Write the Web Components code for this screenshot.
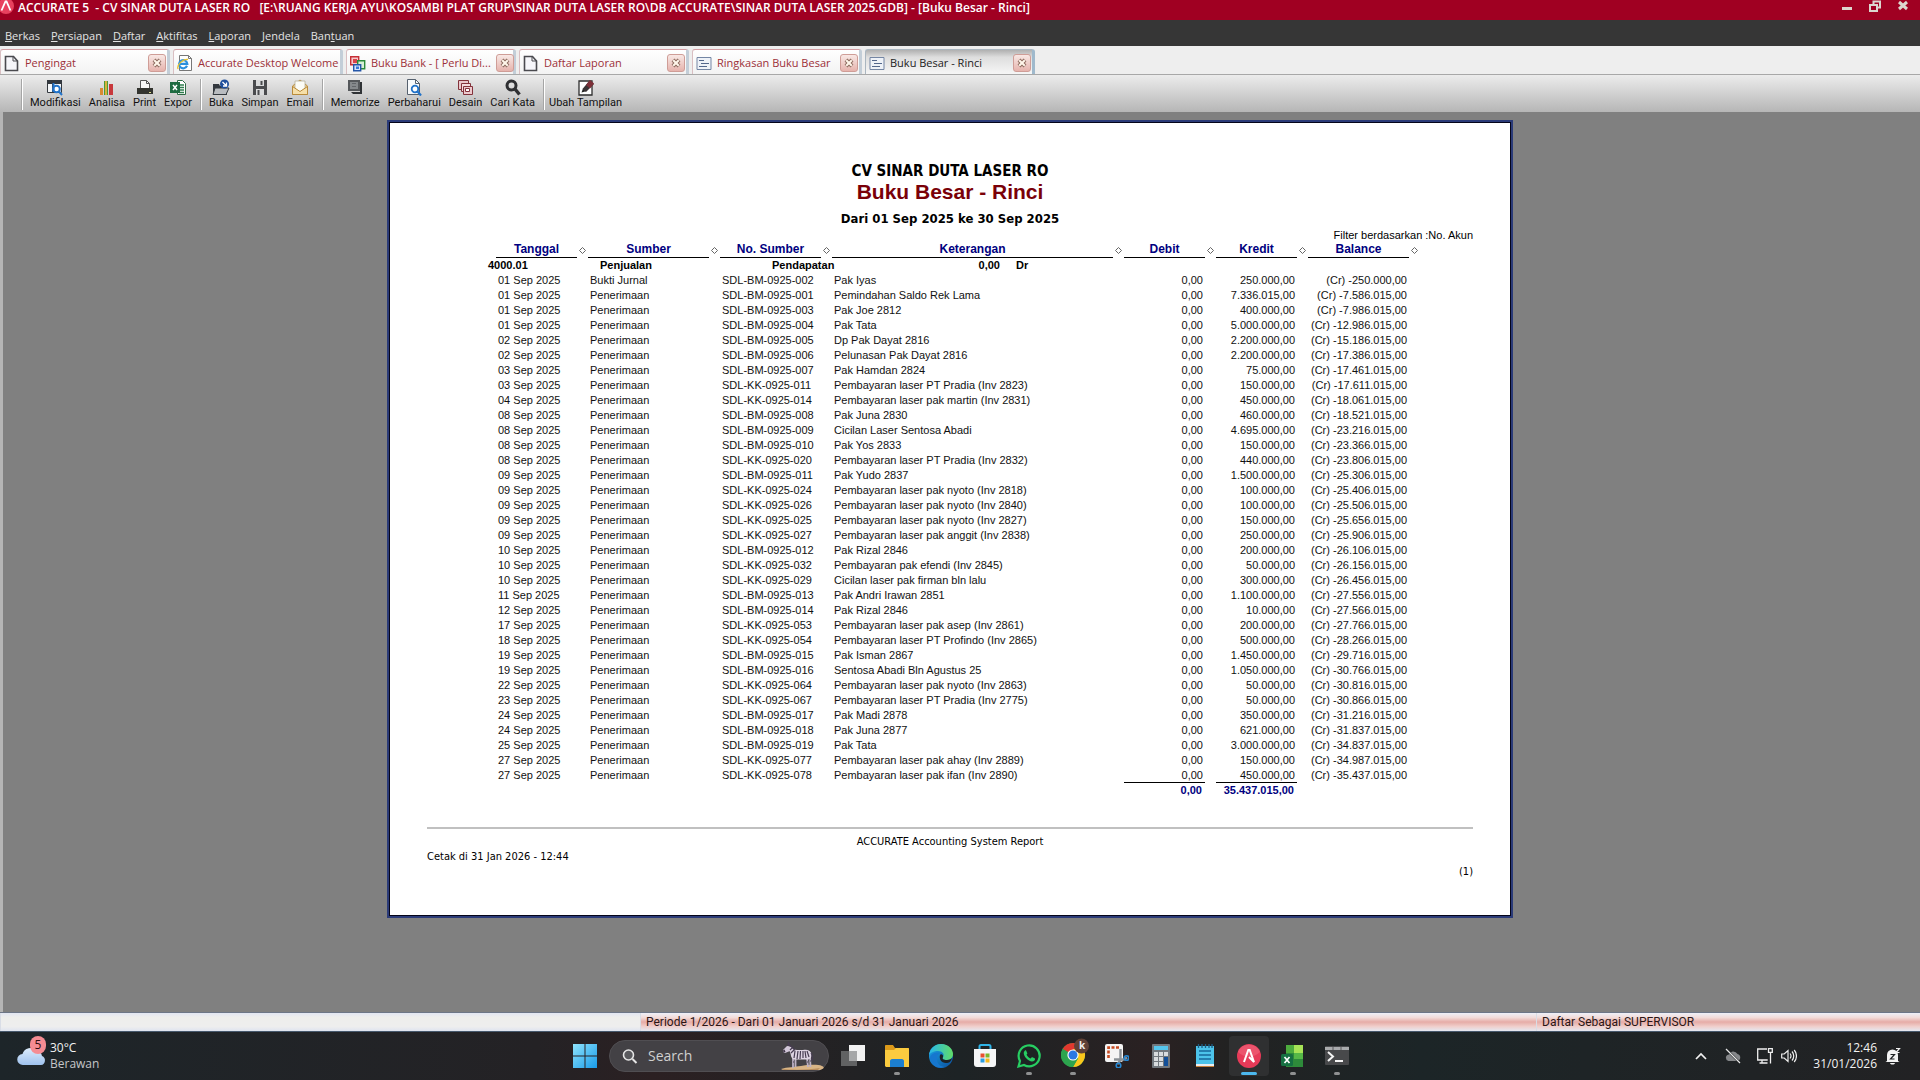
<!DOCTYPE html>
<html lang="id">
<head>
<meta charset="utf-8">
<title>ACCURATE 5 - Buku Besar - Rinci</title>
<style>
html,body{height:100%;margin:0}
body{font-family:Roboto,"Open Sans",sans-serif;background:#808080}
</style>
</head>
<body>
<accurate-app></accurate-app>
<script>
const svg=(w,h,body,extra='')=>`<svg width="${w}" height="${h}" viewBox="0 0 ${w} ${h}" aria-hidden="true" ${extra}>${body}</svg>`;
const ICON={
 logo:svg(14,16,'<circle cx="6" cy="6" r="8" fill="#e8415f"/><path d="M1.500 10.500 5.500 1.500h1l4 9" fill="none" stroke="#fff" stroke-width="1.800"/>'),
 min:svg(12,14,'<path d="M1 7h10v3H1z" fill="#dcd6cf"/>'),
 restore:svg(12,14,'<path d="M4.500 4V1.500h6.500v6H8.500" fill="none" stroke="#dcd6cf" stroke-width="2"/><path d="M1 5h7v6H1z" fill="#a00022" stroke="#dcd6cf" stroke-width="2"/>'),
 close:svg(12,14,'<path d="m2 2 8 7M10 2 2 9" stroke="#dcd6cf" stroke-width="3"/>'),
 doc:svg(16,17,'<path d="M1.500 1.500h8l4 4.500v9.500h-12z" fill="#f6f6fa" stroke="#4a4a4f" stroke-width="1.600"/><path d="M9 1.500V6h4.500" fill="none" stroke="#4a4a4f"/>'),
 ie:svg(16,17,'<path d="M2.500.500h9l3 3v12h-12z" fill="#fff" stroke="#777"/><path d="M11.500.500v3h3" fill="none" stroke="#777"/><path d="M10 10.800A4.100 4.100 0 1 1 10.300 8.800H3" fill="none" stroke="#2c8fdc" stroke-width="2.200"/><path d="M1 14C-.500 10 6 3.500 11 4.500" fill="none" stroke="#e9c22e" stroke-width="1.300"/>'),
 bank:svg(16,17,'<path d="M.700 1.700h8v8h-8z" fill="#f7c9cb" stroke="#c62f36" stroke-width="1.400"/><path d="M3 4h4v4H3z" fill="#d8444a"/><path d="M7.700 5.700h7v8h-7z" fill="#d7f0d7" stroke="#2a8a3a" stroke-width="1.400"/><path d="M3.700 9.700h7v6h-7z" fill="#d4e2fb" stroke="#2456a8" stroke-width="1.400"/><path d="M6 11.500h3v2.500H6z" fill="#3a78d8"/>'),
 report:svg(16,17,'<path d="M1 2.500h14v12H1z" fill="#eef2f8" stroke="#7486a4"/><path d="M3 5.500h5M5 8.500h8M3 11.500h8" stroke="#53678c"/>'),
 x:svg(10,10,'<path d="m2 2 6 6M8 2 2 8" stroke="#8c6a5e" stroke-width="4"/><path d="m2.200 2.200 5.600 5.600M7.800 2.200 2.200 7.800" stroke="#fff6ea" stroke-width="2"/>'),
 modifikasi:svg(18,17,'<path d="M1.500 2.500h14v11h-14z" fill="#f4f6f8" stroke="#33383e"/><path d="M1 1h15v4H1z" fill="#33383e"/><path d="M6.500 5v8" stroke="#33383e"/><circle cx="10.500" cy="10" r="3.300" fill="#fff" stroke="#2273c9" stroke-width="2"/><path d="M7.500 4v9M13 12.500l3 3.500" stroke="#2273c9" stroke-width="2"/>'),
 analisa:svg(18,17,'<path d="M2 9h3v7H2z" fill="#d98a32"/><path d="M6 2h4v14H6z" fill="#4d9a35"/><path d="M7 2h2v14H7z" fill="#d6b13c"/><path d="M11 5h4v11h-4z" fill="#c8383c"/>'),
 print:svg(18,17,'<path d="M4.500 9V1.500h6l3 3V9" fill="#f7f7f7" stroke="#555"/><path d="M10.500 1.500v3h3" fill="none" stroke="#555"/><path d="M1 9h16v6H1z" fill="#33342f"/><path d="M13 13h2v1h-2z" fill="#dadb8c"/>'),
 expor:svg(18,17,'<path d="M8.500 1.500h5l3 3v11h-8z" fill="#fff" stroke="#2d6b45"/><path d="M10 6h5M10 8.500h5M10 11h5M10 13.500h5" stroke="#2d7d4c" stroke-width="1.300"/><path d="M1 3h10v11H1z" fill="#1d6b41"/><path d="m4 6 4 5M8 6l-4 5" stroke="#fff" stroke-width="1.500"/>'),
 buka:svg(18,17,'<path d="M1 5h6l1 2h7v9H1z" fill="#33383e"/><path d="M3 9h14l-3 6.500H1z" fill="#b9bcc0" stroke="#33383e"/><circle cx="12.500" cy="5" r="4.500" fill="#1f4f9c"/><path d="m10.500 3 3.500 3.500M14.500 3.500v3.500H11" fill="none" stroke="#fff" stroke-width="1.300"/>'),
 simpan:svg(18,17,'<path d="M2 1h14v15H2z" fill="#4a4b4e"/><path d="M5 1h8v6H5zM5 10h8v6H5z" fill="#d9dadb"/><path d="M9.500 2h2v4h-2zM6.500 11h2v5h-2z" fill="#4a4b4e"/>'),
 email:svg(18,17,'<path d="M1.500 7 9 1l7.500 6v8.500h-15z" fill="#e9c98a" stroke="#b98b3b"/><path d="M4 2h10v8l-5 3-5-3z" fill="#fcfcf6" stroke="#b5b09c" stroke-width=".800"/><path d="m1.500 7.500 7.500 5 7.500-5v8h-15z" fill="#f6dfa8" stroke="#b98b3b"/>'),
 memorize:svg(18,17,'<path d="M2 1h12v11H2z" fill="#55585b"/><path d="M4 3h8v7H4z" fill="#85898c"/><path d="M14 3h2v12H7l-2-2h9z" fill="#303336"/><path d="M6 4.500h4M6 7.500h4" stroke="#62666a"/>'),
 perbaharui:svg(18,17,'<path d="M2.500.500h8l4 4v11h-12z" fill="#f8fafc" stroke="#56616e"/><path d="M10.500.500v4h4" fill="none" stroke="#56616e"/><circle cx="10" cy="10" r="3.300" fill="#fff" stroke="#2273c9" stroke-width="1.800"/><path d="m12.500 12.500 3.500 4" stroke="#2273c9" stroke-width="2.200"/>'),
 desain:svg(18,17,'<path d="M1.500 1.500h10v9h-10z" fill="#e9c8cb" stroke="#83323b"/><path d="M4.500 4.500h9v8h-9z" fill="#f3dcdf" stroke="#83323b"/><path d="M6.500 7.500h9v8h-9z" fill="#ecc9cd" stroke="#83323b"/><path d="M8.500 9.500h4v3h-4z" fill="#fff" stroke="#83323b"/>'),
 cari:svg(18,17,'<circle cx="7.500" cy="6.500" r="4.500" fill="none" stroke="#2f3033" stroke-width="3"/><path d="m11 10 4.500 5.500" stroke="#2f3033" stroke-width="3.400"/>'),
 ubah:svg(18,17,'<path d="M2 2h13v14H2z" fill="#fff" stroke="#2e2e2e" stroke-width="1.300"/><path d="M4.500 13.500 6 9.500l3 2.800z" fill="#222"/><path d="m5.500 10 7-8.500L17 5l-8 8z" fill="#3b3335"/><path d="m9 6 4-5 4 3.500-4 5z" fill="#7d2f38"/>'),
 diamond:svg(7,7,'<path d="m3.500.500 3 3-3 3-3-3z" fill="#fff" stroke="#555" stroke-width=".900"/>'),
 weather:svg(30,30,'<defs><linearGradient id="c" x1="0" y1="0" x2="0" y2="1"><stop offset="0" stop-color="#dcecfc"/><stop offset="1" stop-color="#9fc2ee"/></linearGradient></defs><path d="M6 28a5.500 5.500 0 0 1-.500-11 8 8 0 0 1 14-3 6 6 0 0 1 5.500 5 4.700 4.700 0 0 1-1 9z" fill="url(#c)"/>'),
 start:svg(24,24,'<defs><linearGradient id="w" x1="0" y1="0" x2="1" y2="1"><stop offset="0" stop-color="#8fe3fb"/><stop offset="1" stop-color="#189bea"/></linearGradient></defs><path d="M0 0h11.500v11.500H0zM12.500 0H24v11.500H12.500zM0 12.500h11.500V24H0zM12.500 12.500H24V24H12.500z" fill="url(#w)"/>'),
 search:svg(16,16,'<circle cx="6.500" cy="7" r="5" fill="#5a5a5e" stroke="#e6e6e6" stroke-width="1.600"/><path d="m10.500 11 4 4" stroke="#e6e6e6" stroke-width="2"/>'),
 zebra:svg(46,30,'<path d="M1 28c6-2 14-2 20-3s16-2 21 0c3 1 2 3-2 4H3z" fill="#d9b586"/><path d="M2 28c10 1 26 1 38-1l-2 2H4z" fill="#b98d5c"/><path d="M13 17v10M15.500 18v8M27 17l1 9M30 15l.500 11" stroke="#bdb2c4" stroke-width="1.800"/><path d="M11 8c4 1 8 1 12 1 5-1 8 1 8.500 4 .300 3-1 5-3 5.500H14c-3-1-4-5-3-10.500z" fill="#ddd3e2"/><path d="m7 5 4 1c2 2 4 5 4 8l-4-1-2-4z" fill="#ddd3e2"/><path d="m3 9 4-4 3 1 0 4-5 2-2-1z" fill="#d3c8da"/><path d="m3 9.500 1.500-1 1 2.500-2 .500z" fill="#3c3244"/><path d="m8 5 .500-3 1.500 2.500c2 1 4 3 5 5" fill="none" stroke="#473c52" stroke-width="1.300"/><path d="M31 12c1.500 2 1.500 5 1.300 8" fill="none" stroke="#473c52" stroke-width="1.200"/><path d="m10 9 2-2M11 12l3-3M14 17l1-7M17 18l1-8M20 18l.500-8M23 17l0-7M26 17l-1-7M29 16l-2-6M13 21h1M27 21h1M30 20h1" fill="none" stroke="#473c52" stroke-width="1.200"/>'),
 taskview:svg(24,24,'<path d="M8 1h16v16H8z" fill="#f2f2f2"/><path d="M0 7h16v15H0z" fill="#6c6d6f" fill-opacity=".850"/><path d="M8 7h8v10H8z" fill="#a6a7a8"/>'),
 folder:svg(24,24,'<path d="M0 2c0-1 .500-1 1-1h7l2 3h14v4H0z" fill="#dc9a1a"/><path d="M0 6h9l2-2h12l1 1v18H1l-1-1z" fill="#fbcb3f"/><path d="M5 23v-6c0-1 1-2 2-2h10c1 0 2 1 2 2v6z" fill="#1c7fd0"/>'),
 edge:svg(24,24,'<defs><linearGradient id="e1" x1="0" y1="0" x2="1" y2="0"><stop offset="0" stop-color="#27b7ee"/><stop offset="1" stop-color="#61dc66"/></linearGradient><linearGradient id="e2" x1="0" y1="0" x2="1" y2="1"><stop offset="0" stop-color="#1aa5e8"/><stop offset="1" stop-color="#0b4f9e"/></linearGradient></defs><circle cx="12" cy="12" r="12" fill="url(#e2)"/><path d="M0 11C1 4 6 0 12 0c8 0 12 6 12 10 0 4-3 6-6 6-4 0-5-1-4-3 2-3-1-6-5-6-4 0-8 2-9 4z" fill="url(#e1)"/><path d="M14 13c-1 2 0 3 4 3 2 0 4-1 5-2-1 4-3 5-6 5-5 0-7-4-6-8 1-2 4 0 3 2z" fill="#1c2226"/><path d="M8 13c-1 6 3 10 8 10-8 3-15-3-15-9 0-4 5-6 10-5-2 1-3 2-3 4z" fill="#1677cf"/>'),
 store:svg(24,24,'<path d="M6.500 6V2.500c0-1 .500-1.500 1.500-1.500h8c1 0 1.500.500 1.500 1.500V6" fill="none" stroke="#2fb4e8" stroke-width="2"/><path d="M1 5h22v15a3 3 0 0 1-3 3H4a3 3 0 0 1-3-3z" fill="#f5f6f7"/><path d="M7.500 9.500h4v4h-4z" fill="#e8502f"/><path d="M12.500 9.500h4v4h-4z" fill="#7eb62a"/><path d="M7.500 14.500h4v4h-4z" fill="#2a9de0"/><path d="M12.500 14.500h4v4h-4z" fill="#f6b81c"/>'),
 whatsapp:svg(24,24,'<path d="M1.500 22.500 3 17a10.500 10.500 0 1 1 4 4z" fill="#1d2423" stroke="#27ce62" stroke-width="2.200"/><path d="M8 6.500c-2 1.500-1.500 4.500 1 7.500 3 3.500 6.500 4.500 8.500 2.500.800-1 .700-1.800 0-2.200l-2-1c-.700-.300-1 .200-1.800 1.200-1.500-.300-3.700-2.500-4.200-4 .800-.700 1-1 .700-1.600l-1-2.200C9 6.200 8.500 6.200 8 6.500z" fill="#27ce62"/>'),
 chrome:svg(30,30,'<circle cx="12" cy="17" r="12" fill="#2da44e"/><path d="M1.600 11A12 12 0 0 1 22.400 11L12 17z" fill="#e1382e"/><path d="M12 11h10.400A12 12 0 0 1 12 29l5.200-9z" fill="#fbc71c"/><path d="M1.600 11 12 17l5.200 3L12 29A12 12 0 0 1 1.600 11z" fill="#2da44e"/><circle cx="12" cy="17" r="5.600" fill="#fff"/><circle cx="12" cy="17" r="4.500" fill="#2b78e4"/><circle cx="20.500" cy="8" r="7.500" fill="#5f4137"/>'),
 snip:svg(24,24,'<rect width="18" height="18" rx="2" fill="#f4f4f4"/><path d="M3.500 14V3.500H14" fill="none" stroke="#c64b22" stroke-width="2.600" stroke-dasharray="3 1.500"/><path d="M15.500 5v11l-3 4M9 15.500h10l3-2" fill="none" stroke="#8b9196" stroke-width="2.400"/><circle cx="21.500" cy="14" r="2.300" fill="none" stroke="#2787d2" stroke-width="1.600"/><circle cx="13.500" cy="21.500" r="2.300" fill="none" stroke="#2787d2" stroke-width="1.600"/>'),
 calc:svg(18,24,'<rect width="18" height="24" rx="1" fill="#71777d"/><path d="M2 2h14v4H2z" fill="#55c5ec"/><path d="M2 8h4v4H2zM7 8h4v4H7zM12 8h4v4h-4zM2 13h4v4H2zM7 13h4v4H7zM2 18h4v4H2zM7 18h4v4H7z" fill="#d9dcdf"/><path d="M12 13h4v9h-4z" fill="#124f99"/>'),
 notepad:svg(18,24,'<path d="M0 2h18v19H0z" fill="#4cc3ea"/><path d="M0 20h18v3H0z" fill="#e9edf0"/><path d="M0 22h18v1H0z" fill="#c8803a"/><path d="M3 7h12M3 11h12M3 15h12" stroke="#17689a" stroke-width="1.500"/><path d="M2.500 0v4M6 0v4M9.500 0v4M13 0v4M16 0v4" stroke="#1d5f86" stroke-width="1.300"/>'),
 accurate:svg(24,24,'<circle cx="12" cy="12" r="12" fill="#e63a58"/><path d="M1 8a12 12 0 0 1 22 0c-6 6-16 6-22 0z" fill="#f0657c" opacity=".600"/><path d="m7 18 4.300-12h1.400L17 18l-5-5" fill="none" stroke="#fff" stroke-width="2"/>'),
 excel:svg(24,24,'<path d="M5 1h17v22H5z" fill="#2e8b3a"/><path d="M5 1h8v8H5z" fill="#4dac3e"/><path d="M13 1h9v8h-9z" fill="#a6e356"/><path d="M13 9h9v6h-9z" fill="#55b847"/><rect y="10" width="12" height="12" rx="1.500" fill="#167042"/><path d="m3.500 13 5 6M8.500 13l-5 6" stroke="#fff" stroke-width="1.700"/>'),
 terminal:svg(24,20,'<rect width="24" height="19" rx="1" fill="#48494b"/><path d="M0 1h24v3H0z" fill="#a9abad"/><path d="M8 1v3M16 1v3" stroke="#5a5b5d"/><path d="m3 6 5 4.500-5 4.500" fill="none" stroke="#f4f4f4" stroke-width="2"/><path d="M10 15h8" stroke="#f4f4f4" stroke-width="2"/>'),
 chevron:svg(16,16,'<path d="m3 11 5-5 5 5" fill="none" stroke="#f2f2f2" stroke-width="1.700"/>'),
 cloud:svg(16,16,'<path d="M3.500 13a3.200 3.200 0 0 1 0-6.300A5 5 0 0 1 12.500 6 3.600 3.600 0 0 1 12.500 13z" fill="#85878a"/><path d="m1.500 1.500 13.500 13.500" stroke="#1f2224" stroke-width="2.400"/><path d="m1 1 14 14" stroke="#e8e8e8" stroke-width="1.200"/>'),
 display:svg(16,16,'<path d="M10 1H.700v11h10M5 12v2.500M2.500 15h8M13.500 6v9.500M11.500.700h3.800v3.600h-3.800zM13.500 4v2" fill="none" stroke="#efefef" stroke-width="1.300"/>'),
 speaker:svg(16,16,'<path d="M.700 6h2.500L7 2.500v11L3.200 10H.700zM9 5.500c1.200 1.500 1.200 3.500 0 5M11 3.500c2.300 2.500 2.300 6.500 0 9M13.200 2c3 3.500 3 8.500 0 12" fill="none" stroke="#efefef" stroke-width="1.200"/>'),
 bell:svg(16,18,'<path d="M2 14V8a5.500 5.500 0 0 1 11 0v6l1.500 1H.500zM5 16h5c-.500 2-4.500 2-5 0z" fill="#f3f3f3"/><path d="M5.500 7.500h4l-4 4.500h4" fill="none" stroke="#1f2224" stroke-width="1.200"/><path d="M11 1.500h3.500L11 5.500h3.500" fill="none" stroke="#f3f3f3" stroke-width="1.200"/>')
};
const define=(name,render)=>customElements.define(name,class extends HTMLElement{
  connectedCallback(){ if(!this.shadowRoot) this.attachShadow({mode:'open'}).innerHTML=render(this); }
});
const RESET='*{box-sizing:border-box}button{font:inherit;color:inherit;background:none;border:0;padding:0;margin:0}svg{display:block}';

define('title-bar',()=>`<style>${RESET}
:host{display:flex;align-items:flex-start;height:20px;background:#a00022;color:#fff}
h1{flex:1;margin:0 0 0 4px;font:600 12px/15px "Open Sans",sans-serif;white-space:pre}
div{display:flex;gap:16px;padding-right:11px}
</style>${ICON.logo}<h1>ACCURATE 5  - CV SINAR DUTA LASER RO   [E:\\RUANG KERJA AYU\\KOSAMBI PLAT GRUP\\SINAR DUTA LASER RO\\DB ACCURATE\\SINAR DUTA LASER 2025.GDB] - [Buku Besar - Rinci]</h1>
<div><button aria-label="Minimize">${ICON.min}</button><button aria-label="Restore">${ICON.restore}</button><button aria-label="Close">${ICON.close}</button></div>`);

define('menu-bar',()=>`<style>${RESET}
:host{display:flex;align-items:flex-end;height:26px;background:#363636;color:#e4e4e4;font:11px/16px "Open Sans",sans-serif}
nav{display:flex;gap:11px;padding:0 5px 2px;align-items:center}
</style><nav>${['<u>B</u>erkas','<u>P</u>ersiapan','<u>D</u>aftar','<u>A</u>ktifitas','<u>L</u>aporan','<u>J</u>endela','Ban<u>t</u>uan'].map(t=>`<button>${t}</button>`).join('')}</nav>`);

define('doc-tab',el=>`<style>${RESET}
:host{display:flex;align-items:center;box-sizing:border-box;width:170px;height:25px;padding:2px 1px 0 3px;gap:5px;border:1px solid #d9bfc2;border-top-color:#d39da2;border-bottom:0;border-right:3px solid #c3ced8;border-radius:3px 3px 0 0;background:linear-gradient(#fff,#f3f3f3);color:#9c3038;font:11px/16px "Open Sans",sans-serif}
:host([active]){color:#222;background:linear-gradient(#b0b0b0,#dedede 30%,#f6f6f6);border-color:#aab6c0;border-right-color:#9fb9cc}
svg{flex:none}
.t{flex:1;text-align:left;white-space:nowrap}
.c{width:18px;height:18px;flex:none;display:grid;place-items:center;border:1px solid #cf9d97;border-radius:3px;background:linear-gradient(#f8e8e5,#e6b3ad)}
</style>${ICON[el.getAttribute('icon')]}<button class="t"><slot></slot></button>${el.hasAttribute('closable')?`<button class="c" aria-label="Tutup">${ICON.x}</button>`:''}`);

define('tab-strip',()=>`<style>${RESET}
:host{display:flex;align-items:flex-end;gap:3px;height:29px;background:#eee;border-bottom:1px solid #a8a8a8}
</style>
<doc-tab icon="doc" closable>Pengingat</doc-tab><doc-tab icon="ie">Accurate Desktop Welcome</doc-tab><doc-tab icon="bank" closable>Buku Bank - [ Perlu Di...</doc-tab><doc-tab icon="doc" closable>Daftar Laporan</doc-tab><doc-tab icon="report" closable>Ringkasan Buku Besar</doc-tab><doc-tab icon="report" closable active>Buku Besar - Rinci</doc-tab>`);

define('tool-button',el=>`<style>${RESET}
:host{display:block}
button{display:flex;flex-direction:column;align-items:center;font-size:11px;line-height:13px;color:#111;white-space:nowrap}
</style><button>${ICON[el.getAttribute('icon')]}<slot></slot></button>`);

define('tool-bar',()=>`<style>${RESET}
:host{display:flex;height:37px;padding:4px 0 0 22px;background:linear-gradient(#ececec,#b6b6b6)}
div{display:flex;gap:8px;padding:0 9px 0 7px;height:31px;border-left:1px solid #fff;box-shadow:-1px 0 #a5a5a5}
div:last-child{padding-left:4px}
</style>
<div><tool-button icon="modifikasi">Modifikasi</tool-button><tool-button icon="analisa">Analisa</tool-button><tool-button icon="print">Print</tool-button><tool-button icon="expor">Expor</tool-button></div>
<div><tool-button icon="buka">Buka</tool-button><tool-button icon="simpan">Simpan</tool-button><tool-button icon="email">Email</tool-button></div>
<div><tool-button icon="memorize">Memorize</tool-button><tool-button icon="perbaharui">Perbaharui</tool-button><tool-button icon="desain">Desain</tool-button><tool-button icon="cari">Cari Kata</tool-button></div>
<div><tool-button icon="ubah">Ubah Tampilan</tool-button></div>`);

const ROWS=`01|BM|002|Pak Iyas|250.000|250.000
01|BM|001|Pemindahan Saldo Rek Lama|7.336.015|7.586.015
01|BM|003|Pak Joe 2812|400.000|7.986.015
01|BM|004|Pak Tata|5.000.000|12.986.015
02|BM|005|Dp Pak Dayat 2816|2.200.000|15.186.015
02|BM|006|Pelunasan Pak Dayat 2816|2.200.000|17.386.015
03|BM|007|Pak Hamdan 2824|75.000|17.461.015
03|KK|011|Pembayaran laser PT Pradia (Inv 2823)|150.000|17.611.015
04|KK|014|Pembayaran laser pak martin (Inv 2831)|450.000|18.061.015
08|BM|008|Pak Juna 2830|460.000|18.521.015
08|BM|009|Cicilan Laser Sentosa Abadi|4.695.000|23.216.015
08|BM|010|Pak Yos 2833|150.000|23.366.015
08|KK|020|Pembayaran laser PT Pradia (Inv 2832)|440.000|23.806.015
09|BM|011|Pak Yudo 2837|1.500.000|25.306.015
09|KK|024|Pembayaran laser pak nyoto (Inv 2818)|100.000|25.406.015
09|KK|026|Pembayaran laser pak nyoto (Inv 2840)|100.000|25.506.015
09|KK|025|Pembayaran laser pak nyoto (Inv 2827)|150.000|25.656.015
09|KK|027|Pembayaran laser pak anggit (Inv 2838)|250.000|25.906.015
10|BM|012|Pak Rizal 2846|200.000|26.106.015
10|KK|032|Pembayaran pak efendi (Inv 2845)|50.000|26.156.015
10|KK|029|Cicilan laser pak firman bln lalu|300.000|26.456.015
11|BM|013|Pak Andri Irawan 2851|1.100.000|27.556.015
12|BM|014|Pak Rizal 2846|10.000|27.566.015
17|KK|053|Pembayaran laser pak asep (Inv 2861)|200.000|27.766.015
18|KK|054|Pembayaran laser PT Profindo (Inv 2865)|500.000|28.266.015
19|BM|015|Pak Isman 2867|1.450.000|29.716.015
19|BM|016|Sentosa Abadi Bln Agustus 25|1.050.000|30.766.015
22|KK|064|Pembayaran laser pak nyoto (Inv 2863)|50.000|30.816.015
23|KK|067|Pembayaran laser PT Pradia (Inv 2775)|50.000|30.866.015
24|BM|017|Pak Madi 2878|350.000|31.216.015
24|BM|018|Pak Juna 2877|621.000|31.837.015
25|BM|019|Pak Tata|3.000.000|34.837.015
27|KK|077|Pembayaran laser pak ahay (Inv 2889)|150.000|34.987.015
27|KK|078|Pembayaran laser pak ifan (Inv 2890)|450.000|35.437.015`.split('\n').map(r=>r.split('|'));

define('ledger-table',()=>`<style>${RESET}
:host{display:block;font:11px/15px "Liberation Sans",Arial,sans-serif;color:#111}
table{table-layout:fixed;width:932px;border-collapse:collapse;border-spacing:0}
th,td{padding:0;white-space:nowrap;text-align:left;height:15px}
th{height:16px}
th div{display:flex;align-items:center;font:700 12px/15px "Liberation Sans",Arial,sans-serif;color:#000080}
th span{flex:1;text-align:center;border-bottom:1px solid #000}
th svg{margin:0 2px}
th:first-child{padding-left:8px}
tbody td{padding-left:2px}
tbody td:first-child{padding-left:10px}
td.n{text-align:right;padding-right:13px}
tr.g td{font-weight:700;color:#000;padding-left:12px}
tr.g td:first-child{padding-left:0}
tr.g td:nth-child(3){padding-left:52px}
tr.g td:nth-child(4){padding-left:0}
.open{display:flex;gap:16px}.open b:first-child{width:168px;text-align:right}
tfoot div{margin:-1px 11px 0 0;padding-right:3px;border-top:1px solid #000;line-height:15px;font-weight:700;color:#000080;text-align:right}
</style>
<table><colgroup><col style="width:100px"><col style="width:132px"><col style="width:112px"><col style="width:292px"><col style="width:92px"><col style="width:92px"><col style="width:112px"></colgroup>
<thead><tr>${['Tanggal','Sumber','No. Sumber','Keterangan','Debit','Kredit','Balance'].map(h=>`<th scope="col"><div><span>${h}</span>${ICON.diamond}</div></th>`).join('')}</tr></thead>
<tbody><tr class="g"><td>4000.01</td><td>Penjualan</td><td>Pendapatan</td><td><div class="open"><b>0,00</b><b>Dr</b></div></td><td></td><td></td><td></td></tr>
${ROWS.map(([d,k,n,t,a,b],i)=>`<tr><td>${d} Sep 2025</td><td>${i?'Penerimaan':'Bukti Jurnal'}</td><td>SDL-${k}-0925-${n}</td><td>${t}</td><td class="n">0,00</td><td class="n">${a},00</td><td class="n">(Cr) -${b},00</td></tr>`).join('')}</tbody>
<tfoot><tr><td></td><td></td><td></td><td></td><td><div>0,00</div></td><td><div>35.437.015,00</div></td><td></td></tr></tfoot></table>`);

define('report-page',()=>`<style>${RESET}
:host{display:block;box-sizing:border-box;width:1126px;padding:40px 38px 37px;background:#fff;border:2px solid #2b3b78;box-shadow:inset 0 0 0 1px #05051a;color:#000}
h2,h3,p{margin:0;text-align:center}
.co{font:700 15px/18px "DejaVu Sans Condensed","DejaVu Sans",sans-serif}
.ti{font:700 21px/24px "Liberation Sans",Arial,sans-serif;color:#7a0008}
.pe{font:700 13px/18px "DejaVu Sans Condensed","DejaVu Sans",sans-serif;padding-top:6px}
.fi{font:11px/14px "Liberation Sans",Arial,sans-serif;text-align:right}
ledger-table{margin-left:61px}
footer{margin-top:29px;padding-top:5px;border-top:2px solid #c0c0c0;font:11px/15px "DejaVu Sans Condensed","DejaVu Sans",sans-serif}
.l{text-align:left}.r{text-align:right}
</style><h3 class="co">CV SINAR DUTA LASER RO</h3><h2 class="ti">Buku Besar - Rinci</h2><h3 class="pe">Dari 01 Sep 2025 ke 30 Sep 2025</h3>
<p class="fi">Filter berdasarkan :No. Akun</p><ledger-table></ledger-table>
<footer><p>ACCURATE Accounting System Report</p><p class="l">Cetak di 31 Jan 2026 - 12:44</p><p class="r">(1)</p></footer>`);

define('status-bar',()=>`<style>${RESET}
:host{display:grid;grid-template-columns:1fr 896px 384px;height:20px;border-top:1px solid #6d7687;border-bottom:1px solid #46586c;font-size:12px;line-height:18px;color:#2a1515;background:#ececec}
span{padding-left:5px;white-space:nowrap;border-left:1px solid #d9dde6;background:linear-gradient(#eef0f8,#f3dcda 25%,#e6aca7 50%,#f0cfcc 75%,#e4e8f2)}
span:first-of-type{background:linear-gradient(#e2e6f2,#eeeeec 25%,#eee 75%,#dfe4f0)}
</style><span></span><span>Periode 1/2026 - Dari 01 Januari 2026 s/d 31 Januari 2026</span><span>Daftar Sebagai SUPERVISOR</span>`);

define('task-item',el=>`<style>${RESET}
:host{display:block;width:44px;height:48px}
button{position:relative;width:100%;height:100%;display:grid;place-items:center}
:host([active]) button::before{content:"";position:absolute;inset:4px 2px;border-radius:4px;background:#2f3031}
svg{position:relative}
:host([icon=chrome]) svg{margin:-6px 0 0 6px}
:host([open]) button::after{content:"";position:absolute;bottom:5px;width:6px;height:3px;border-radius:2px;background:#8f9091}
:host([active]) button::after{width:16px;background:#4cb8ee}
b{position:absolute;left:28px;top:7px;font:700 10px/12px "Open Sans",sans-serif;color:#eee}
</style><button aria-label="${el.getAttribute('name')}">${ICON[el.getAttribute('icon')]}${el.getAttribute('icon')==='chrome'?'<b>k</b>':''}</button>`);

define('task-bar',()=>`<style>${RESET}
:host{display:grid;grid-template-columns:1fr auto 1fr;height:48px;color:#f2f2f2;font:12px/16px "Open Sans",sans-serif;background:linear-gradient(90deg,#1d2529,#242225 28%,#2b2022 34%,#1d2325 50%,#2a2122 60%,#222 64%,#1c2527 74%,#222224)}
.w{display:flex;align-items:center;gap:6px;padding-left:18px}
.w p,.k p{margin:0}.w small{font-size:12px;color:#c4c6c8}
.i{position:relative;width:26px}.i svg{margin-top:-8px;margin-left:-1px}
.i b{position:absolute;left:12px;top:-9px;width:16px;height:18px;border-radius:9px;background:#f58c93;color:#301014;font:12px/18px "Open Sans",sans-serif;text-align:center}
.m{display:flex;align-items:center;padding-left:2px}
label{display:flex;align-items:center;gap:10px;width:220px;height:32px;margin:0 2px;padding:0 2px 0 12px;border-radius:16px;background:#434145;border:1px solid #504e52}
input{flex:1;min-width:0;border:0;padding:0;background:none;color:#d8d8d8;font:14px/20px "Open Sans",sans-serif}
input::placeholder{color:#d0d0d0;opacity:1}
.t{display:flex;align-items:center;justify-content:flex-end;padding-right:19px}
.t button{margin-left:16px}.t .s{margin-left:8px}
.k{margin:0 8px 0 16px;text-align:right}
</style>
<div class="w"><div class="i">${ICON.weather}<b>5</b></div><div><p>30°C</p><p><small>Berawan</small></p></div></div>
<div class="m"><task-item icon="start" name="Start"></task-item><label>${ICON.search}<input type="search" placeholder="Search" aria-label="Search">${ICON.zebra}</label>
<task-item icon="taskview" name="Task view"></task-item><task-item icon="folder" name="File Explorer" open></task-item><task-item icon="edge" name="Edge"></task-item><task-item icon="store" name="Store"></task-item><task-item icon="whatsapp" name="WhatsApp" open></task-item><task-item icon="chrome" name="Chrome" open></task-item><task-item icon="snip" name="Snipping Tool"></task-item><task-item icon="calc" name="Calculator"></task-item><task-item icon="notepad" name="Notepad"></task-item><task-item icon="accurate" name="Accurate" open active></task-item><task-item icon="excel" name="Excel" open></task-item><task-item icon="terminal" name="Terminal" open></task-item></div>
<div class="t"><button aria-label="Hidden icons">${ICON.chevron}</button><button aria-label="OneDrive">${ICON.cloud}</button><button aria-label="Network">${ICON.display}</button><button class="s" aria-label="Volume">${ICON.speaker}</button><div class="k"><p>12:46</p><p>31/01/2026</p></div>${ICON.bell}</div>`);

define('accurate-app',()=>`<style>${RESET}
:host{display:flex;flex-direction:column;min-height:100vh}
main{flex:1;display:flex;justify-content:center;align-items:flex-start;padding:8px 23px 0 0;background:#808080;border-left:3px solid #b5b5b5}
</style><title-bar></title-bar><menu-bar></menu-bar><tab-strip></tab-strip><tool-bar></tool-bar><main><report-page></report-page></main><status-bar></status-bar><task-bar></task-bar>`);
</script>
</body>
</html>
